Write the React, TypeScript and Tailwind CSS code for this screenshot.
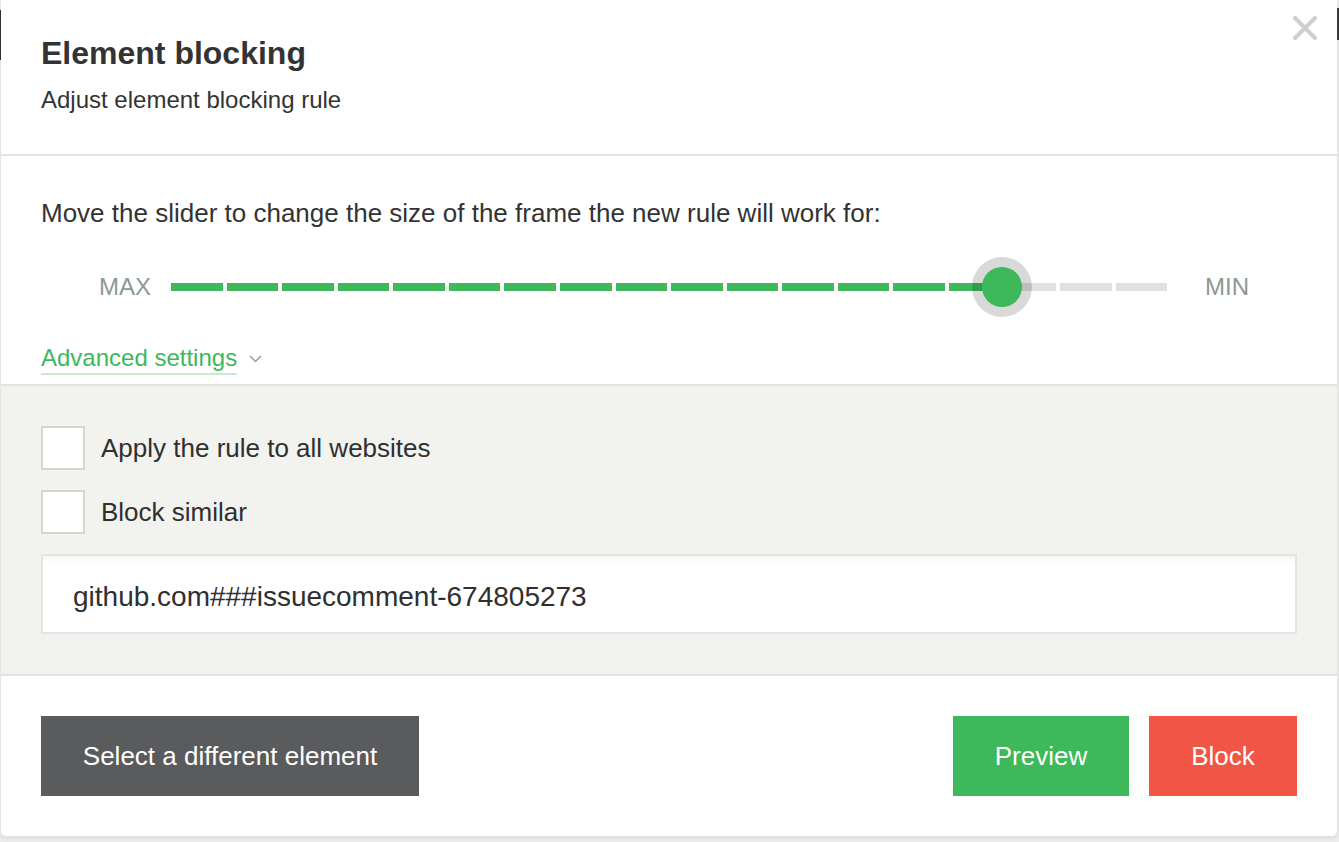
import React from "react";

const FONT = { fontFamily: '"Liberation Sans", Arial, Helvetica, sans-serif' };

function Slider() {
  const segs = Array.from({ length: 18 }, (_, i) => i);
  return (
    <div className="flex items-center h-[60px] mt-[29px]">
      <span className="w-[130px] pr-[20px] text-right text-[24px] leading-[30px] text-[#8d9a91]">MAX</span>
      <div className="relative w-[996px] h-[60px] flex items-center">
        <div className="flex w-full gap-[4px]">
          {segs.map((i) => (
            <div
              key={i}
              className={i < 15 ? "flex-1 h-[8px] bg-[#3db85a]" : "flex-1 h-[8px] bg-[#e0e0dc]"}
            />
          ))}
        </div>
        <div className="absolute left-[801px] top-0 w-[60px] h-[60px] rounded-full bg-[rgba(0,0,0,0.15)] flex items-center justify-center">
          <div className="w-[40px] h-[40px] rounded-full bg-[#3db85a]" />
        </div>
      </div>
      <span className="pl-[38px] text-[24px] leading-[30px] text-[#8d9a91]">MIN</span>
    </div>
  );
}

function Checkbox({ label }: { label: string }) {
  return (
    <div className="flex items-center">
      <div className="w-[44px] h-[44px] bg-white border-2 border-[#d4d4d4]" />
      <span className="ml-[16px] text-[26px] leading-[30px] text-[#2f2f2f]">{label}</span>
    </div>
  );
}

export default function App() {
  return (
    <div className="relative w-[1339px] h-[842px] bg-[#ececec] overflow-hidden" style={FONT}>
      <div className="absolute left-0 top-[10px] w-[1px] h-[50px] bg-[#333]" />
      <div className="absolute right-0 top-[8px] w-[2px] h-[32px] bg-[#3a3a3a]" />
      <div className="relative ml-[1px] w-[1336px] h-[836px] bg-white rounded-b-[5px] shadow-[0_2px_6px_rgba(0,0,0,0.08)] flex flex-col">
        <button className="absolute right-[20px] top-[16px] w-[24px] h-[24px]">
          <svg viewBox="0 0 24 24" width="24" height="24">
            <path d="M2 2 L22 22 M22 2 L2 22" stroke="#cfcfcf" strokeWidth="4" strokeLinecap="round" />
          </svg>
        </button>

        <div className="h-[156px] shrink-0 px-[40px] pt-[34px] border-b-2 border-[#e3e3e3]">
          <div className="text-[32px] leading-[38px] font-bold text-[#333]">Element blocking</div>
          <div className="mt-[13px] text-[24px] leading-[30px] text-[#333]">Adjust element blocking rule</div>
        </div>

        <div className="px-[40px] pt-[42px] h-[228px] shrink-0">
          <div className="text-[26px] leading-[30px] text-[#333]">
            Move the slider to change the size of the frame the new rule will work for:
          </div>
          <Slider />
          <div className="mt-[26px] flex items-center">
            <span className="text-[24px] leading-[30px] text-[#3db85a] border-b-2 border-[#c6ecd0]">Advanced settings</span>
            <svg className="ml-[12px]" width="13" height="8" viewBox="0 0 13 8">
              <path d="M1 1 L6.5 6.5 L12 1" fill="none" stroke="#9a9a9a" strokeWidth="1.5" />
            </svg>
          </div>
        </div>

        <div className="bg-[#f2f2ee] border-y-2 border-[#e2e2de] px-[40px] pt-[40px] pb-[40px] flex flex-col gap-[20px]">
          <Checkbox label="Apply the rule to all websites" />
          <Checkbox label="Block similar" />
          <div className="h-[80px] bg-white border-2 border-[#e4e4e2] shadow-[inset_0_6px_6px_-4px_rgba(0,0,0,0.06)] flex items-center px-[30px] pt-[6px] text-[28px] text-[#2f2f2f]">
            github.com###issuecomment-674805273
          </div>
        </div>

        <div className="flex-1 px-[40px] flex items-center">
          <button className="h-[80px] w-[378px] bg-[#5a5b5d] text-white text-[26px]">Select a different element</button>
          <div className="flex-1" />
          <button className="h-[80px] w-[176px] bg-[#3db85a] text-white text-[26px]">Preview</button>
          <button className="ml-[20px] h-[80px] w-[148px] bg-[#f05545] text-white text-[26px]">Block</button>
        </div>
      </div>
    </div>
  );
}
